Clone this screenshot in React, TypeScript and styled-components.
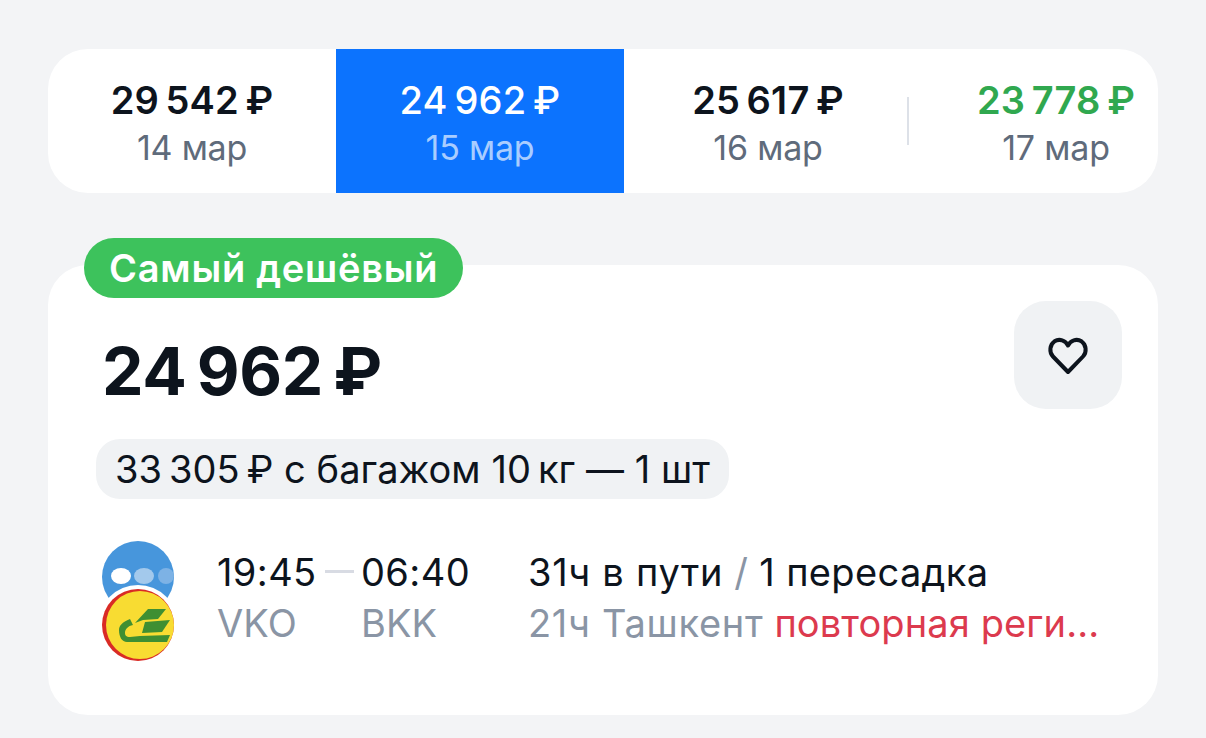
import styled, { createGlobalStyle } from "styled-components";

const GlobalStyle = createGlobalStyle`
    html, body {
        margin: 0;
        padding: 0;
        background: #f3f4f6;
        font-family: Inter, "Noto Sans", sans-serif;
    }
`;

const Page = styled.div`
    width: 1206px;
    height: 738px;
    padding: 49px 48px 0;
    box-sizing: border-box;
    overflow: hidden;
`;

const DateStrip = styled.div`
    display: flex;
    height: 144px;
    background: #fff;
    border-radius: 40px;
    overflow: hidden;
`;

const DateTab = styled.div<{ $active?: boolean }>`
    position: relative;
    flex: 0 0 288px;
    display: flex;
    flex-direction: column;
    align-items: center;
    padding-top: 30px;
    box-sizing: border-box;
    background: ${(props) => (props.$active ? "#0c73fe" : "transparent")};
`;

const TabDivider = styled.div`
    position: absolute;
    right: 3px;
    top: 48px;
    width: 2px;
    height: 48px;
    background: #dde1e8;
`;

const TabPrice = styled.div<{ $color: string; $weight: number }>`
    font-size: 38px;
    line-height: 42px;
    letter-spacing: 0.2px;
    font-weight: ${(props) => props.$weight};
    color: ${(props) => props.$color};
    white-space: nowrap;
`;

const TabDate = styled.div<{ $color: string }>`
    margin-top: 8px;
    font-size: 34px;
    line-height: 38px;
    letter-spacing: -0.2px;
    color: ${(props) => props.$color};
    white-space: nowrap;
`;

const Card = styled.div`
    position: relative;
    margin-top: 72px;
    height: 450px;
    background: #fff;
    border-radius: 40px;
    padding: 36px 36px 0 48px;
    box-sizing: border-box;
`;

const Badge = styled.div`
    position: absolute;
    left: 36px;
    top: -27px;
    height: 60px;
    padding: 0 25px;
    display: flex;
    align-items: center;
    background: #3dc25c;
    border-radius: 30px;
    color: #fff;
    font-size: 38px;
    letter-spacing: 0.75px;
    font-weight: 600;
    white-space: nowrap;
`;

const PriceRow = styled.div`
    display: flex;
    justify-content: space-between;
    align-items: flex-start;
`;

const MainPrice = styled.div`
    margin: 32px 0 0 6px;
    font-size: 66px;
    line-height: 76px;
    letter-spacing: -0.3px;
    font-weight: 700;
    color: #0d141d;
    white-space: nowrap;
`;

const FavButton = styled.div`
    width: 108px;
    height: 108px;
    border-radius: 32px;
    background: #f0f2f4;
    display: flex;
    align-items: center;
    justify-content: center;
`;

const BaggagePill = styled.div`
    display: inline-flex;
    align-items: center;
    height: 60px;
    margin: 30px 0 0 0;
    padding: 0 19px;
    border-radius: 24px;
    background: #f0f2f4;
    color: #0d141d;
    font-size: 38px;
    letter-spacing: 0.05px;
    white-space: nowrap;
`;

const FlightRow = styled.div`
    display: flex;
    margin-top: 42px;
`;

const Logos = styled.div`
    position: relative;
    flex: 0 0 72px;
    height: 120px;
    margin: 0 0 0 6px;
`;

const LogoSvg = styled.svg<{ $top: number }>`
    position: absolute;
    left: 0;
    top: ${(props) => props.$top}px;
`;

const TimeColumn = styled.div`
    margin-left: 43px;
    display: grid;
    grid-template-columns: 100px 44px 108px;
    grid-template-rows: 51px 51px;
    padding-top: 5px;
    align-items: center;
`;

const TimeText = styled.div`
    font-size: 38px;
    letter-spacing: 0.4px;
    color: #0d141d;
    white-space: nowrap;
`;

const Dash = styled.div`
    justify-self: center;
    width: 29px;
    height: 3px;
    background: #d8dbe3;
`;

const CodeText = styled.div`
    font-size: 38px;
    letter-spacing: 0.1px;
    color: #8a95a5;
    white-space: nowrap;
`;

const Gap = styled.div``;

const Details = styled.div`
    margin-left: 59px;
    display: grid;
    grid-template-rows: 51px 51px;
    padding-top: 5px;
    align-items: center;
    font-size: 38px;
    letter-spacing: 0.35px;
    white-space: nowrap;
    color: #0d141d;
`;

const Lead = styled.span`
    letter-spacing: 0.7px;
`;

const Slash = styled.span`
    color: #8a95a5;
`;

const Muted = styled.div`
    color: #8a95a5;
`;

const Alert = styled.span`
    color: #dc3a4e;
    letter-spacing: 0.1px;
`;

const tabs = [
    { price: "29\u2009542\u2009₽", date: "14 мар", priceColor: "#0d141d", dateColor: "#5f6b7b", weight: 600 },
    { price: "24\u2009962\u2009₽", date: "15 мар", priceColor: "#fff", dateColor: "#a9cdff", weight: 500, active: true },
    { price: "25\u2009617\u2009₽", date: "16 мар", priceColor: "#0d141d", dateColor: "#5f6b7b", weight: 600, divider: true },
    { price: "23\u2009778\u2009₽", date: "17 мар", priceColor: "#30a84f", dateColor: "#5f6b7b", weight: 600 },
];

function App() {
    return (
        <Page>
            <GlobalStyle />
            <DateStrip>
                {tabs.map((tab) => (
                    <DateTab key={tab.date} $active={tab.active}>
                        <TabPrice $color={tab.priceColor} $weight={tab.weight}>{tab.price}</TabPrice>
                        <TabDate $color={tab.dateColor}>{tab.date}</TabDate>
                        {tab.divider && <TabDivider />}
                    </DateTab>
                ))}
            </DateStrip>
            <Card>
                <Badge>Самый дешёвый</Badge>
                <PriceRow>
                    <MainPrice>24{"\u2009"}962{"\u2009"}₽</MainPrice>
                    <FavButton>
                        <svg width="44" height="44" viewBox="0 0 44 44" fill="none">
                            <path
                                d="M22 39 L7 23.5 C2.8 19 3.8 11.5 8.5 8.3 C13.5 5.2 19.5 7.5 22 12.5 C24.5 7.5 30.5 5.2 35.5 8.3 C40.2 11.5 41.2 19 37 23.5 Z"
                                stroke="#0d141d"
                                strokeWidth="4"
                                strokeLinejoin="round"
                            />
                        </svg>
                    </FavButton>
                </PriceRow>
                <BaggagePill>33{"\u2009"}305{"\u2009"}₽ с багажом 10{"\u2009"}кг — 1 шт</BaggagePill>
                <FlightRow>
                    <Logos>
                        <LogoSvg $top={0} width="72" height="72" viewBox="0 0 72 72">
                            <clipPath id="blue-logo">
                                <circle cx="36" cy="36" r="36" />
                            </clipPath>
                            <g clipPath="url(#blue-logo)">
                                <rect width="72" height="72" fill="#4796dc" />
                                <ellipse cx="19" cy="35" rx="10" ry="8" fill="#fff" />
                                <ellipse cx="42" cy="35" rx="10" ry="8" fill="#a3c9ec" />
                                <ellipse cx="64" cy="35" rx="8" ry="8" fill="#7db2e5" />
                            </g>
                        </LogoSvg>
                        <LogoSvg $top={44} width="76" height="76" viewBox="0 0 76 76">
                            <circle cx="36" cy="40" r="40" fill="#fff" />
                            <circle cx="36" cy="40" r="36" fill="#d92b25" />
                            <circle cx="38" cy="40" r="34" fill="#f8dc32" />
                            <path d="M46 24 L64 24 L56 34 L41 35 L33 38 Z" fill="#3f8f32" />
                            <path d="M43 37 L68 35 L60 47 L40 48 Z" fill="#3f8f32" />
                            <path d="M28 34 C20 37 17 41 17 45 C17 52 20 57 25 57 L65 57 L68 50 L38 51 L28 52 C24 52 23 50 23 48 C23 44 26 41 31 40 Z" fill="#3f8f32" />
                        </LogoSvg>
                    </Logos>
                    <TimeColumn>
                        <TimeText>19:45</TimeText>
                        <Dash />
                        <TimeText>06:40</TimeText>
                        <CodeText>VKO</CodeText>
                        <Gap />
                        <CodeText>BKK</CodeText>
                    </TimeColumn>
                    <Details>
                        <div><Lead>31ч в пути</Lead> <Slash>/</Slash> 1 пересадка</div>
                        <Muted><Lead>21ч Ташкент</Lead> <Alert>повторная реги...</Alert></Muted>
                    </Details>
                </FlightRow>
            </Card>
        </Page>
    );
}

export default App;
